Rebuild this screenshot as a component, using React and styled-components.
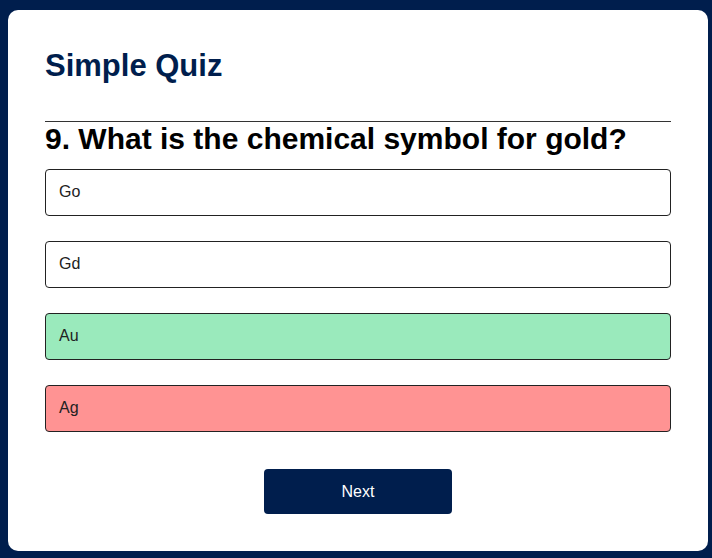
import React from "react";
import styled, { createGlobalStyle } from "styled-components";

const Global = createGlobalStyle`
  * { box-sizing: border-box; }
  html, body { margin: 0; padding: 0; }
  body {
    background: #001e4d;
    font-family: "Liberation Sans", Arial, sans-serif;
    padding: 10px 4px 7px 8px;
  }
`;

const Card = styled.div`
  background: #fff;
  width: 700px;
  height: 541px;
  border-radius: 10px;
  padding: 38px 37px 37px;
  display: flex;
  flex-direction: column;
`;

const Title = styled.h1`
  margin: 0;
  font-size: 31px;
  line-height: 36px;
  font-weight: 700;
  color: #001e4d;
  padding-bottom: 37px;
  border-bottom: 1px solid #333;
`;

const Question = styled.h2`
  margin: 0 0 16px;
  padding-top: 3px;
  font-size: 30px;
  line-height: 28px;
  font-weight: 700;
  color: #000;
`;

const Options = styled.div`
  display: flex;
  flex-direction: column;
  gap: 25px;
`;

const Option = styled.button`
  height: 47px;
  width: 100%;
  text-align: left;
  padding: 0 13px 2px;
  font-family: inherit;
  font-size: 16px;
  color: #222;
  border: 1px solid #222;
  border-radius: 4px;
  background: ${(p) =>
    p.$state === "correct" ? "#9aeabc" : p.$state === "wrong" ? "#ff9393" : "#fff"};
`;

const NextButton = styled.button`
  align-self: center;
  margin-top: 37px;
  width: 188px;
  height: 45px;
  border: none;
  border-radius: 4px;
  background: #001e4d;
  color: #fff;
  font-family: inherit;
  font-size: 16px;
`;

const answers = [
  { text: "Go" },
  { text: "Gd" },
  { text: "Au", state: "correct" },
  { text: "Ag", state: "wrong" },
];

export default function App() {
  return (
    <>
      <Global />
      <Card>
        <Title>Simple Quiz</Title>
        <Question>9. What is the chemical symbol for gold?</Question>
        <Options>
          {answers.map((a) => (
            <Option key={a.text} $state={a.state}>
              {a.text}
            </Option>
          ))}
        </Options>
        <NextButton>Next</NextButton>
      </Card>
    </>
  );
}
